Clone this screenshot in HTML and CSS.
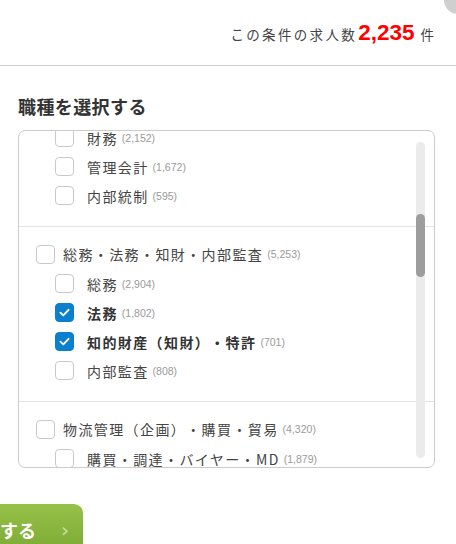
FILE: index.html
```html
<!DOCTYPE html>
<html lang="ja">
<head>
<meta charset="utf-8">
<title>職種を選択する</title>
<link rel="stylesheet" href="styles.css">
</head>
<body>
<div class="page">
  <div class="close-btn"></div>
  <header class="count-bar">
    <span class="count-label">この条件の求人数</span>
    <span class="count-num">2,235</span>
    <span class="count-unit">件</span>
  </header>

  <section class="picker">
    <h2 class="picker-title">職種を選択する</h2>
    <div class="list-box">
      <div class="list-scroll">
        <div class="list-inner">
          <div class="group first">
            <label class="row sub"><span class="cb"></span><span class="txt">財務</span><span class="num">(2,152)</span></label>
            <label class="row sub"><span class="cb"></span><span class="txt">管理会計</span><span class="num">(1,672)</span></label>
            <label class="row sub"><span class="cb"></span><span class="txt">内部統制</span><span class="num">(595)</span></label>
          </div>
          <div class="group">
            <label class="row head"><span class="cb"></span><span class="txt">総務・法務・知財・内部監査</span><span class="num">(5,253)</span></label>
            <label class="row sub"><span class="cb"></span><span class="txt">総務</span><span class="num">(2,904)</span></label>
            <label class="row sub on"><span class="cb"><svg viewBox="0 0 20 20" class="tick"><path d="M5.2 10.2 L8.6 13.4 L14.8 6.8"/></svg></span><span class="txt">法務</span><span class="num">(1,802)</span></label>
            <label class="row sub on"><span class="cb"><svg viewBox="0 0 20 20" class="tick"><path d="M5.2 10.2 L8.6 13.4 L14.8 6.8"/></svg></span><span class="txt">知的財産（知財）・特許</span><span class="num">(701)</span></label>
            <label class="row sub"><span class="cb"></span><span class="txt">内部監査</span><span class="num">(808)</span></label>
          </div>
          <div class="group">
            <label class="row head"><span class="cb"></span><span class="txt">物流管理（企画）・購買・貿易</span><span class="num">(4,320)</span></label>
            <label class="row sub"><span class="cb"></span><span class="txt">購買・調達・バイヤー・MD</span><span class="num">(1,879)</span></label>
          </div>
        </div>
      </div>
      <div class="scrollbar"><div class="thumb"></div></div>
    </div>
  </section>

  <footer class="actions">
    <button class="submit"><span class="submit-txt">検索する</span><span class="chev">&#x203A;</span></button>
  </footer>
</div>
</body>
</html>
```

FILE: styles.css
```css
html, body {
  margin: 0;
  padding: 0;
  overflow: hidden;
  background: #fff;
}
body {
  font-family: "Noto Sans CJK JP", "Noto Sans", sans-serif;
  color: #444;
  text-spacing-trim: space-all;
}
.page {
  position: relative;
  width: 456px;
  height: 544px;
  overflow: hidden;
}
.close-btn {
  position: absolute;
  right: -16px;
  top: -14px;
  width: 28px;
  height: 28px;
  border-radius: 50%;
  background: #cfcfcf;
}

/* header */
.count-bar {
  height: 65px;
  border-bottom: 1px solid #cdcdcd;
  display: flex;
  justify-content: flex-end;
  align-items: baseline;
  padding: 0 22px 0 0;
  line-height: 65px;
}
.count-label {
  font-size: 13.5px;
  letter-spacing: 2.35px;
  color: #444;
}
.count-num {
  font-family: "Liberation Sans", Arial, sans-serif;
  font-weight: bold;
  font-size: 22.5px;
  color: #ff0000;
  margin: 0 6px 0 1px;
}
.count-unit {
  font-size: 13.5px;
  color: #444;
}

/* picker */
.picker {
  padding: 27px 21px 0 18px;
}
.picker-title {
  margin: 0 0 11px;
  font-size: 18px;
  line-height: 26px;
  font-weight: bold;
  letter-spacing: 0.4px;
  color: #333;
}
.list-box {
  position: relative;
  height: 338px;
  box-sizing: border-box;
  border: 1px solid #cbcbcb;
  border-radius: 7px;
  overflow: hidden;
}
.list-scroll {
  height: 100%;
  overflow: hidden;
}
.list-inner {
  margin-top: -8px;
}
.group {
  padding: 12px 0 16px;
  border-bottom: 1px solid #e3e3e3;
}
.group.first {
  padding-top: 0;
}
.row {
  display: flex;
  align-items: center;
  font-size: 14px;
  letter-spacing: 1.4px;
  color: #444;
  white-space: nowrap;
}
.row.head {
  height: 30px;
  padding-left: 17px;
}
.row.sub {
  height: 29px;
  padding-left: 36px;
}
.cb {
  flex: none;
  width: 19px;
  height: 19px;
  box-sizing: border-box;
  border: 1px solid #c9c9c9;
  border-radius: 4px;
  background: #fff;
  display: flex;
  align-items: center;
  justify-content: center;
}
.row.head .cb {
  margin-right: 8px;
}
.row.sub .cb {
  margin-right: 13px;
}
.row.on .cb {
  background: #0a7fce;
  border-color: #0a7fce;
}
.tick {
  width: 19px;
  height: 19px;
  fill: none;
  stroke: #fff;
  stroke-width: 2.2;
  stroke-linecap: round;
  stroke-linejoin: round;
}
.row.on .txt {
  font-weight: bold;
  color: #333;
}
.num {
  font-family: "Liberation Sans", Arial, sans-serif;
  font-size: 10.5px;
  letter-spacing: 0;
  color: #9a9a9a;
  margin-left: 4px;
}

.scrollbar {
  position: absolute;
  top: 11px;
  bottom: 9px;
  right: 9px;
  width: 9px;
  border-radius: 5px;
  background: #ebebeb;
}
.thumb {
  margin-top: 72px;
  height: 63px;
  border-radius: 5px;
  background: #9d9d9d;
}

/* footer */
.actions {
  margin-top: 36px;
}
.submit {
  display: flex;
  align-items: center;
  margin-left: -36px;
  width: 119px;
  height: 41px;
  padding: 10px 0 0 0;
  border: none;
  border-radius: 0 9px 0 0;
  background: linear-gradient(#97c24a, #7fad35);
  color: #fff;
  font-family: "Noto Sans CJK JP", sans-serif;
  font-size: 18px;
  font-weight: bold;
  line-height: 22px;
  overflow: hidden;
}
.submit-txt {
  white-space: nowrap;
}
.chev {
  margin-left: 25px;
  font-family: "DejaVu Sans", sans-serif;
  font-weight: normal;
  font-size: 20px;
  color: #c7de9f;
}
```
